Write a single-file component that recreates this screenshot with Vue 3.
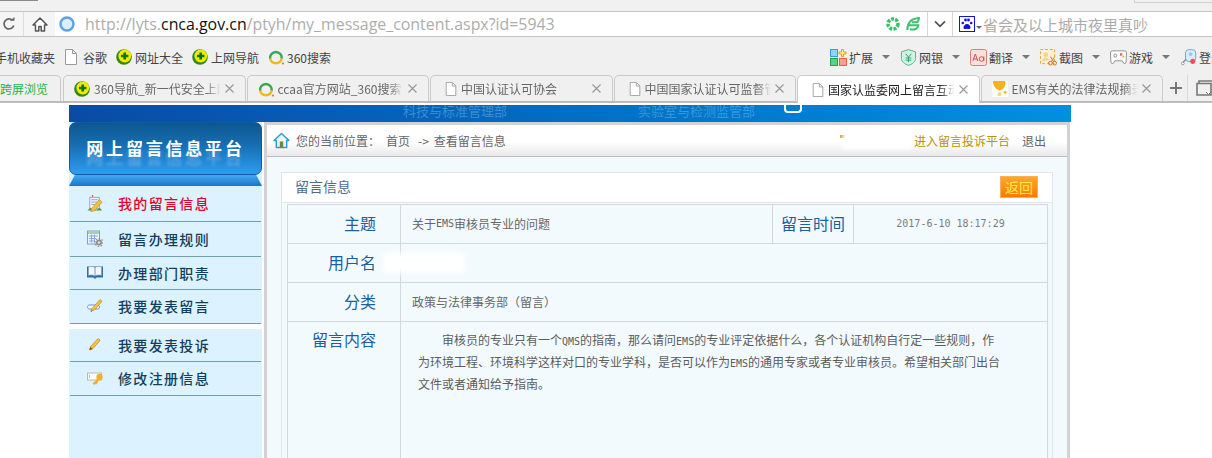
<script setup>
const bookmarks = [
  { icon: '#i-doc', text: '谷歌', cls: 'bm-doc' },
  { icon: '#i-360', text: '网址大全', cls: 'bm-360' },
  { icon: '#i-360', text: '上网导航', cls: 'bm-360' },
  { icon: '#i-ring', text: '360搜索', cls: 'bm-360' }
]
const tools = [
  { icon: '#t-ext', text: '扩展' },
  { icon: '#t-bank', text: '网银' },
  { icon: '#t-aa', text: '翻译' },
  { icon: '#t-cut', text: '截图' },
  { icon: '#t-game', text: '游戏' }
]
const tabs = [
  { icon: '#i-360', title: '360导航_新一代安全上网导航' },
  { icon: '#i-ring', title: 'ccaa官方网站_360搜索' },
  { icon: '#i-doc', title: '中国认证认可协会', doc: true },
  { icon: '#i-doc', title: '中国国家认证认可监督管理委员会', doc: true },
  { icon: '#i-doc', title: '国家认监委网上留言互动平台', doc: true, active: true },
  { icon: '#i-bell', title: 'EMS有关的法律法规摘录集合' }
]
const menu = [
  { icon: '#m-note', text: '我的留言信息', h: 36, active: true },
  { icon: '#m-cal', text: '留言办理规则', h: 35 },
  { icon: '#m-book', text: '办理部门职责', h: 33 },
  { icon: '#m-chat', text: '我要发表留言', h: 34, gapAfter: true },
  { icon: '#m-pen', text: '我要发表投诉', h: 33 },
  { icon: '#m-key', text: '修改注册信息', h: 34 }
]
</script>

<template>
  <div class="page">
    <svg class="defs" width="0" height="0">
      <symbol id="i-360" viewBox="0 0 16 16">
        <circle cx="8" cy="8" r="7.8" fill="#2f8a12" />
        <circle cx="8.800" cy="7" r="6.400" fill="#f4ea00" />
        <path d="M7.400 3.400h2.600v2.400h2.400v2.400H10v2.400H7.400V8.200H5V5.800h2.400z" fill="#17700f" />
      </symbol>
      <symbol id="i-ring" viewBox="0 0 16 16">
        <path d="M2.200 9.800A5.800 5.800 0 1 1 13.600 9.800" fill="none" stroke="#35a853" stroke-width="2.400" />
        <path d="M2.200 9.500A5.800 5.800 0 0 0 13.600 9.500" fill="none" stroke="#f6b71a" stroke-width="2.400" />
        <circle cx="15" cy="14.500" r="1.100" fill="#ee7a1a" />
      </symbol>
      <symbol id="i-doc" viewBox="0 0 16 16">
        <path d="M2.500 .5h7l4 4v11h-11z" fill="#fff" stroke="#9a9a9a" />
        <path d="M9.500 .5v4h4" fill="none" stroke="#9a9a9a" />
      </symbol>
      <symbol id="i-bell" viewBox="0 0 17 17">
        <rect width="17" height="17" fill="#fff" />
        <path d="M1 0h13c1 5-1 9-6 10C4 9 1 5 1 0z" fill="#f4b41a" />
        <circle cx="14" cy="12" r="1.500" fill="#f4b41a" />
        <circle cx="8" cy="14" r="2" fill="#f6d27a" />
      </symbol>
      <symbol id="t-ext" viewBox="0 0 17 17">
        <rect x=".5" y=".5" width="7" height="7" fill="#8fd4fa" stroke="#3c9ad8" />
        <rect x=".5" y="9.500" width="7" height="7" fill="#5fd08a" stroke="#1fa04a" />
        <rect x="9.500" y="9.500" width="7" height="7" fill="#fba08f" stroke="#e8604a" />
        <path d="M11.500 .5h2v2.500h2.500v2h-2.500v2.500h-2V5H9V3h2.500z" fill="#fff2a0" stroke="#e8a010" />
      </symbol>
      <symbol id="t-bank" viewBox="0 0 17 18">
        <path d="M8.500 .7l7.500 2.300v7c0 3.500-3.500 6-7.500 7.300C4.500 16 1 13.500 1 10V3z" fill="#d4f2e4" stroke="#4cb488" />
        <path d="M5.500 5l3 3.500L11.500 5M8.500 8.500V14M5.500 9.500h6M5.500 11.800h6" fill="none" stroke="#2c9c6c" />
      </symbol>
      <symbol id="t-aa" viewBox="0 0 17 17">
        <rect x=".5" y=".5" width="16" height="16" rx="2" fill="#fde0dc" stroke="#d88078" />
        <path d="M2.800 12l2.500-7 2.500 7M3.700 10h3.200" fill="none" stroke="#c8584e" />
        <circle cx="11.500" cy="10" r="2.300" fill="none" stroke="#c8584e" />
        <path d="M13.800 7.500V12" stroke="#c8584e" />
      </symbol>
      <symbol id="t-cut" viewBox="0 0 18 18">
        <rect x=".5" y=".5" width="15" height="15" fill="#fdf0d4" stroke="#e8a030" stroke-dasharray="3 2" />
        <circle cx="6" cy="6" r="2.500" fill="#f4d48a" />
        <path d="M2.500 13c0-3 2-4 3.500-4s3 1 3 3" fill="#f4d48a" />
        <circle cx="11" cy="15" r="2" fill="none" stroke="#c87818" />
        <circle cx="15.500" cy="15" r="2" fill="none" stroke="#c87818" />
        <path d="M11 8l3.500 5.500M15.500 8L12 13.500" stroke="#c87818" />
      </symbol>
      <symbol id="t-game" viewBox="0 0 18 17">
        <path d="M2.500 1.500h13a2 2 0 0 1 2 2l-.5 10c0 1.500-2 2-2.800 .8L13 12H5l-1.200 2.300C3 15.500 1 15 1 13.500L.5 3.500a2 2 0 0 1 2-2z" fill="#fff" stroke="#8c8c8c" />
        <circle cx="5.500" cy="6.500" r="1.600" fill="none" stroke="#8c8c8c" />
        <rect x="10.500" y="4" width="2.500" height="2.500" fill="#e85a4a" />
        <rect x="13" y="6.500" width="2" height="2" fill="#f0b030" />
      </symbol>
      <symbol id="t-user" viewBox="0 0 18 20">
        <rect x="5.500" y=".8" width="12" height="14" rx="4" fill="#d8eefc" stroke="#5e9cc8" />
        <circle cx="11.500" cy="6" r="2.300" fill="#9cc8ea" />
        <path d="M6 12L1.500 17" stroke="#8c8c8c" stroke-width="1.500" />
        <circle cx="2.300" cy="17" r="1.600" fill="#fff" stroke="#8c8c8c" />
        <circle cx="14" cy="14.500" r="3" fill="#f0505a" />
      </symbol>
      <symbol id="m-note" viewBox="0 0 16 18">
        <rect x="2.500" y="2.500" width="10" height="12" fill="#f4f6fa" stroke="#8fa4c0" />
        <path d="M4 5h7M4 7.500h6M4 10h4" stroke="#8fa4c0" />
        <path d="M5.500 0v2" stroke="#c83030" />
        <path d="M0 16.500l3-3 3 2 4 0 3-2 2.500 3z" fill="#4a9a3a" />
        <path d="M4 14.500L12.500 5l3 2.500-8 9.200-4 .8z" fill="#f4c040" stroke="#c8862a" stroke-width=".7" />
      </symbol>
      <symbol id="m-cal" viewBox="0 0 16 16">
        <rect x=".5" y=".5" width="12" height="13" fill="#eef4fc" stroke="#7f9cd0" />
        <rect x="1" y="1" width="11" height="2.500" fill="#a8d0a0" />
        <path d="M2 5.500h9M2 8h7M2 10.500h6M4.500 4v8M7.500 4v8" stroke="#8fa8d4" />
        <circle cx="12" cy="12" r="3" fill="#8e8e8e" />
        <circle cx="12" cy="12" r="4" fill="none" stroke="#8e8e8e" stroke-width="1.200" stroke-dasharray="1.500 1.500" />
        <circle cx="12" cy="12" r="1.200" fill="#e6e6e6" />
      </symbol>
      <symbol id="m-book" viewBox="0 0 16 14">
        <path d="M0 1h16v11H9.500l-1.500 1.500L6.500 12H0z" fill="#2d6ea8" />
        <path d="M1.500 1.500c2.500-.8 5 -.5 6.500 .5v8.500c-1.500-1-4-1.300-6.500-.5zM14.500 1.500c-2.500-.8-5-.5-6.500 .5v8.500c1.500-1 4-1.300 6.500-.5z" fill="#f4f8fc" stroke="#7a9cc0" stroke-width=".6" />
      </symbol>
      <symbol id="m-chat" viewBox="0 0 16 16">
        <path d="M2.500 6.500h8c1.200 0 2 .8 2 2s-.8 2-2 2H7l-3 3 .5-3h-2c-1.200 0-2-.8-2-2s.8-2 2-2z" fill="#f2f7fd" stroke="#6d8fc0" />
        <path d="M5 10L12.500 1.500c1-.8 2.800 .8 2 2L7.500 11.500l-3 1z" fill="#f4c040" stroke="#c8862a" stroke-width=".7" />
      </symbol>
      <symbol id="m-pen" viewBox="0 0 16 16">
        <path d="M3.500 10L10.500 2.500c1-1 3 .8 2.300 2L5.500 12.500 2.500 13.500z" fill="#f4c040" stroke="#c8862a" stroke-width=".7" />
        <path d="M2.500 13.500l.7-3 2.300 2z" fill="#7a4a20" />
      </symbol>
      <symbol id="m-key" viewBox="0 0 16 14">
        <rect x=".5" y="1.500" width="14" height="7" fill="#fff" stroke="#b8b8b8" />
        <path d="M2.500 3.500v3" stroke="#b8b8b8" />
        <circle cx="12.500" cy="5.500" r="3.200" fill="#f0b030" />
        <path d="M11 6.500L5.500 12l1.800 1.500 1-1 1 .6 1-1.300 2-3.800z" fill="#f0b030" />
      </symbol>
    </svg>

    <div class="strip"></div>

    <div class="address">
      <div class="nav-btn refresh">
        <svg width="14" height="14" viewBox="0 0 14 14"><path d="M11.800 8.500A5 5 0 1 1 10.500 3.300" fill="none" stroke="#666" stroke-width="1.700" /><path d="M8 3.800h4.500V0z" fill="#666" /></svg>
      </div>
      <div class="nav-btn home">
        <svg width="16" height="15" viewBox="0 0 16 15"><path d="M8 1L1 8h2.500v6h3.300V9.500h2.400V14h3.300V8H15z" fill="#fff" stroke="#555" stroke-width="1.500" stroke-linejoin="round" /></svg>
      </div>
      <div class="url-box">
        <svg class="globe" width="16" height="16" viewBox="0 0 16 16"><circle cx="8" cy="8" r="6.500" fill="#dceefd" stroke="#5aa2e8" stroke-width="2.400" /></svg>
        <span class="url">http://lyts.<b>cnca.gov.cn</b>/ptyh/my_message_content.aspx?id=5943</span>
        <svg class="speed" width="14" height="14" viewBox="0 0 14 14"><circle cx="7" cy="7" r="5" fill="none" stroke="#3cc070" stroke-width="3.600" stroke-dasharray="3 1.200" /></svg>
        <svg class="leaf" width="14" height="14" viewBox="0 0 14 14"><path d="M1.500 13C1 6 5 1.500 13 1c0 2-.8 3-2 4.300H6M2.500 8.300h9.800c-.5 3-3.500 5-8.300 4" fill="none" stroke="#3cc070" stroke-width="2" /></svg>
      </div>
      <div class="drop">
        <svg width="12" height="8" viewBox="0 0 12 8"><path d="M1 1.300l5 5 5-5" fill="none" stroke="#555" stroke-width="1.800" /></svg>
      </div>
      <div class="search">
        <svg width="16" height="16" viewBox="0 0 16 16">
          <rect x=".5" y=".5" width="15" height="15" fill="#fff" stroke="#1414e0" />
          <path d="M8 8c2 0 3.500 2 3.500 3.500S10 13.500 8 12.800c-2 .7-3.500 .2-3.500-1.300S6 8 8 8z" fill="#1414e0" />
          <circle cx="3.800" cy="7" r="1.300" fill="#1414e0" /><circle cx="6.500" cy="4" r="1.400" fill="#1414e0" />
          <circle cx="9.500" cy="4" r="1.400" fill="#1414e0" /><circle cx="12.200" cy="7" r="1.300" fill="#1414e0" />
        </svg>
        <i class="mini-caret"></i>
        <span class="search-text">省会及以上城市夜里真吵</span>
      </div>
    </div>

    <div class="bookbar">
      <span class="bm-first">手机收藏夹</span>
      <span v-for="b in bookmarks" :key="b.text" class="bm" :class="b.cls">
        <svg class="bm-icon"><use :href="b.icon" /></svg>{{ b.text }}
      </span>
      <div class="tools">
        <i class="grip"></i>
        <span v-for="t in tools" :key="t.text" class="tool">
          <svg class="tool-icon"><use :href="t.icon" /></svg>
          <span class="tool-text">{{ t.text }}</span>
          <i class="caret"></i>
        </span>
        <span class="tool">
          <svg class="tool-icon"><use href="#t-user" /></svg>
          <span class="tool-text">登录</span>
        </span>
      </div>
    </div>

    <div class="tabbar">
      <div class="tab tab-first">跨屏浏览</div>
      <div v-for="t in tabs" :key="t.title" class="tab" :class="{ active: t.active, doc: t.doc }">
        <svg class="tab-icon"><use :href="t.icon" /></svg>
        <span class="tab-title">{{ t.title }}</span>
        <svg class="tab-close" width="9" height="9" viewBox="0 0 9 9"><path d="M.5 .5l8 8M8.500 .5l-8 8" stroke="#999" stroke-width="1.200" /></svg>
      </div>
      <div class="tab-plus">
        <svg width="12" height="12" viewBox="0 0 12 12"><path d="M6 0v12M0 6h12" stroke="#777" stroke-width="2" /></svg>
      </div>
      <div class="tab-restore">
        <svg width="17" height="17" viewBox="0 0 17 17"><path d="M3 3V1h14M1 3.500h14V15H1z" fill="none" stroke="#777" stroke-width="1.600" /><path d="M10 12l2.500 2.500L15 12" fill="#fff" stroke="#777" /></svg>
      </div>
    </div>

    <div class="site">
      <div class="banner">
        <span class="banner-a">科技与标准管理部</span>
        <span class="banner-b">实验室与检测监管部</span>
        <i class="banner-tag"></i>
      </div>

      <div class="main">
        <aside class="side">
          <div class="side-head"><span>网上留言信息平台</span></div>
          <div class="side-wedge"></div>
          <ul class="menu">
            <li
              v-for="m in menu"
              :key="m.text"
              class="menu-item"
              :class="{ on: m.active, gap: m.gapAfter }"
              :style="{ height: m.h + 'px' }"
            >
              <svg class="menu-icon"><use :href="m.icon" /></svg>
              <span>{{ m.text }}</span>
            </li>
          </ul>
        </aside>

        <section class="content">
          <div class="crumb">
            <svg class="crumb-home" width="17" height="17" viewBox="0 0 17 17">
              <path d="M8.500 1.500L1 8.500h2.300V15.500h10.400V8.500H16z" fill="#e8f6fc" stroke="#2b9ad0" stroke-width="1.400" stroke-linejoin="round" />
              <rect x="6.800" y="9.500" width="3.400" height="6" fill="#5a8a50" />
            </svg>
            <span class="crumb-label">您的当前位置&#xFF1A;</span>
            <span class="crumb-a">首页</span>
            <span class="crumb-arrow">-&gt;</span>
            <span>查看留言信息</span>
            <span class="crumb-right">
              <i class="crumb-mark"></i>
              <i class="crumb-blob"></i>
              <a class="crumb-link">进入留言投诉平台</a>
              <a class="crumb-exit">退出</a>
            </span>
          </div>

          <div class="panel">
            <div class="panel-head">
              <span>留言信息</span>
              <button class="back" type="button">返回</button>
            </div>
            <div class="table">
              <div class="c label">主题</div>
              <div class="c val">关于<span class="mono">EMS</span>审核员专业的问题</div>
              <div class="c label center">留言时间</div>
              <div class="c date">2017-6-10 18:17:29</div>

              <div class="c label">用户名</div>
              <div class="c val wide"><i class="user-blob"></i></div>

              <div class="c label">分类</div>
              <div class="c val wide">政策与法律事务部&#xFF08;留言&#xFF09;</div>

              <div class="c label tall">留言内容</div>
              <div class="c body wide">
                <p>审核员的专业只有一个<span class="mono">QMS</span>的指南&#xFF0C;那么请问<span class="mono">EMS</span>的专业评定依据什么&#xFF0C;各个认证机构自行定一些规则&#xFF0C;作为环境工程、环境科学这样对口的专业学科&#xFF0C;是否可以作为<span class="mono">EMS</span>的通用专家或者专业审核员。希望相关部门出台文件或者通知给予指南。</p>
              </div>
            </div>
          </div>
        </section>
      </div>
    </div>
  </div>
</template>

<style scoped>
.page {
  width: 1212px;
  height: 458px;
  overflow: hidden;
  background: #fff;
  font-family: "Noto Sans CJK SC", "Noto Sans", sans-serif;
  font-size: 12px;
  color: #555;
  display: flex;
  flex-direction: column;
}
.defs { display: block; flex: none; }
svg { flex: none; }
.strip {
  height: 11px;
  background: #f1f1f1;
  flex: none;
  display: flex;
  justify-content: space-between;
}
.strip::before { content: ""; width: 38px; height: 1px; background: #8a8a8a; }
.strip::after { content: ""; width: 77px; height: 2px; border-bottom: 1px solid #d0d0d0; border-left: 1px solid #d0d0d0; }

.address {
  height: 26px;
  flex: none;
  display: flex;
  align-items: stretch;
  border-top: 1px solid #c4c4c4;
  border-bottom: 1px solid #c4c4c4;
  box-sizing: border-box;
  background: #fff;
}
.nav-btn { display: flex; align-items: center; justify-content: center; background: #f5f5f5; }
.refresh { width: 23px; border-right: 1px solid #dcdcdc; justify-content: flex-start; }
.refresh svg { margin-left: 2px; }
.home { width: 31px; }
.url-box { flex: 1; display: flex; align-items: center; padding-left: 4px; min-width: 0; }
.globe { margin-right: 10px; }
.url { font-family: "Open Sans", "Noto Sans", sans-serif; font-size: 15.900px; color: #adadad; white-space: nowrap; line-height: 24px; }
.url b { font-weight: 400; color: #111; }
.speed { margin-left: auto; margin-right: 6px; }
.leaf { margin-right: 7px; }
.drop { width: 24px; border-left: 1px solid #d8d8d8; border-right: 1px solid #d8d8d8; display: flex; align-items: center; justify-content: center; }
.search { width: 259px; display: flex; align-items: center; padding-left: 6px; box-sizing: border-box; }
.mini-caret { border: 3px solid transparent; border-top-color: #666; margin: 9px 1px 0 1px; }
.search-text { font-size: 15px; color: #ababab; white-space: nowrap; }

.bookbar {
  height: 38px;
  flex: none;
  background: #f0f0f0;
  display: flex;
  align-items: center;
  color: #444;
  white-space: nowrap;
  box-sizing: border-box;
  padding-top: 2px;
}
.bm-first { margin-left: -5px; width: 61px; flex: none; }
.bm { display: flex; align-items: center; }
.bm-doc { margin-left: 7px; }
.bm-doc .bm-icon { margin-right: 4px; }
.bm-360 { margin-left: 9px; }
.bm-icon { width: 16px; height: 16px; margin-right: 3px; }
.tools { margin-left: auto; display: flex; align-items: center; flex: none; width: 394px; }
.grip { width: 4px; height: 16px; margin: 0 12px 0 0; background: radial-gradient(circle, #bbb 1.800px, transparent 2px) 0 0 / 4px 6px; }
.tool { width: 70px; flex: none; display: flex; align-items: center; }
.tool-icon { width: 17px; height: 17px; margin-right: 2px; }
.tool-text { font-size: 12px; color: #444; }
.caret { border: 4px solid transparent; border-top-color: #777; margin: 4px 0 0 9px; }

.tabbar {
  height: 28px;
  flex: none;
  background: #f0f0f0;
  border-bottom: 2px solid #bcbcbc;
  box-sizing: border-box;
  display: flex;
  gap: 1px;
  align-items: flex-end;
}
.tab {
  width: 182.500px;
  height: 26px;
  flex: none;
  box-sizing: border-box;
  border: 1px solid #cacaca;
  border-bottom: none;
  border-radius: 5px 5px 0 0;
  background: #f0f0f0;
  display: flex;
  align-items: center;
  padding-left: 10px;
  padding-right: 11px;
  color: #666;
  white-space: nowrap;
}
.tab-first {
  width: 61px;
  margin-right: 1px;
  padding: 0;
  border-left: none;
  border-radius: 0 5px 0 0;
  color: #1db34a;
}
.tab.active { background: #fff; height: 28px; margin-bottom: -2px; color: #222; }
.tab-icon { width: 16px; height: 16px; margin-right: 4px; }
.tab.doc .tab-icon { margin-left: 3px; margin-right: 3px; width: 14px; height: 14px; }
.tab-title {
  flex: 1;
  min-width: 0;
  overflow: hidden;
  -webkit-mask-image: linear-gradient(90deg, #000 88%, transparent 100%);
  mask-image: linear-gradient(90deg, #000 88%, transparent 100%);
}
.tab-close { margin-left: 4px; }
.tab-plus { width: 23px; flex: none; height: 26px; display: flex; align-items: center; justify-content: center; border-right: 1px solid #dadada; }
.tab-restore { flex: 1; height: 26px; display: flex; align-items: center; padding-left: 7px; }

.site { margin: 2px 0 0 69px; width: 1002px; flex: none; }
.banner {
  height: 17px;
  background: linear-gradient(90deg, #0a4ba4 0%, #0560b8 30%, #0078cc 65%, #0090e0 100%);
  display: flex;
  align-items: flex-start;
  overflow: hidden;
  color: rgba(170, 215, 245, .36);
  font-size: 13px;
  line-height: 11px;
  padding-left: 334px;
  box-sizing: border-box;
  white-space: nowrap;
}
.banner-a { width: 235px; flex: none; }
.banner-b { width: 146px; flex: none; }
.banner-tag { width: 14px; height: 6px; border: 2px solid #fff; border-top: none; border-radius: 0 0 4px 4px; flex: none; }

.main { display: flex; align-items: stretch; height: 336px; }
.side { width: 193px; flex: none; background: #dcf2fe; margin-right: 2px; }
.side-head {
  height: 53px;
  box-sizing: border-box;
  border: 1px solid #0d5c9c;
  border-radius: 7px;
  background: linear-gradient(180deg, #0d5791 0%, #176fb4 45%, #2e9df0 100%);
  display: flex;
  align-items: center;
  justify-content: center;
  color: #fff;
  font-size: 17px;
  font-weight: 700;
  letter-spacing: 2.800px;
  text-shadow: 0 9px 3px rgba(255, 255, 255, .22);
  padding-bottom: 3px;
}
.side-wedge {
  height: 11px;
  background: linear-gradient(180deg, #41a8f4, #1976c8);
  clip-path: polygon(3% 0, 97% 0, 100% 100%, 0 100%);
}
.menu { list-style: none; margin: 0; padding: 0; }
.menu-item {
  box-sizing: border-box;
  display: flex;
  align-items: center;
  padding: 0 0 2px 18px;
  position: relative;
  color: #123f5e;
  font-size: 14px;
  font-weight: 500;
  letter-spacing: 1.330px;
  white-space: nowrap;
  box-shadow: inset 0 -1px 0 #6f9fa8;
  margin: 0 1px;
}
.menu-item svg { margin-left: -1px; }
.menu-item.on { color: #e6002d; }
.menu-item.gap::after { content: ""; position: absolute; left: -1px; right: -1px; top: 100%; height: 5px; background: #fff; }
.menu-item.gap + .menu-item { margin-top: 5px; }
.menu-icon { width: 16px; height: 17px; margin-right: 15px; }

.content {
  flex: 1;
  min-width: 0;
  margin-right: 1px;
  border: 3px solid #d2d2d2;
  border-bottom: none;
  background: #f2fafe;
  box-sizing: border-box;
}
.crumb {
  height: 32px;
  box-sizing: border-box;
  border-bottom: 1px solid #bdbdbd;
  background: linear-gradient(180deg, #fff 0%, #fff 55%, #e8e8e8 100%);
  display: flex;
  align-items: center;
  padding: 0 21px 0 6px;
  color: #666;
  white-space: nowrap;
}
.crumb-home { margin-right: 6px; }
.crumb-label { width: 90px; flex: none; }
.crumb-a { margin-right: 8px; }
.crumb-arrow { margin-right: 5px; }
.crumb-right { margin-left: auto; display: flex; align-items: center; }
.crumb-mark { width: 5px; height: 3px; background: #b89400; margin-right: -3px; margin-top: -8px; }
.crumb-blob { width: 70px; height: 16px; background: #fff; filter: blur(2px); margin-right: 2px; }
.crumb-link { color: #b89400; margin-right: 12px; }
.crumb-exit { color: #666; }

.panel {
  margin: 15px 14px 0 14px;
  border: 1px solid #e2e6e8;
  border-bottom: none;
  height: 300px;
  padding: 0 4px 0 5px;
}
.panel-head {
  height: 30px;
  box-sizing: border-box;
  margin: 0 -4px 0 -5px;
  border-bottom: 1px solid #e2e6e8;
  background: #fff;
  display: flex;
  align-items: center;
  padding: 0 14px 4px 13px;
  font-size: 14px;
  color: #4f6c8a;
}
.back {
  margin-left: auto;
  align-self: flex-start;
  margin-top: 3px;
  width: 38px;
  height: 22px;
  padding: 0;
  font-family: inherit;
  font-size: 14px;
  line-height: 20px;
  color: #ffee4a;
  border: 1px solid #f4b060;
  background: linear-gradient(180deg, #ffa82c 0%, #ff7800 100%);
}
.table {
  margin-top: 1px;
  border: 1px solid #d4d8dc;
  border-bottom: none;
  display: grid;
  grid-template-columns: 113px 372px 81px 1fr;
  grid-template-rows: 39px 39px 39px 140px;
}
.c {
  box-sizing: border-box;
  border-bottom: 1px solid #d4d8dc;
  border-right: 1px solid #d4d8dc;
  display: flex;
  align-items: center;
  position: relative;
  min-width: 0;
  padding-bottom: 2px;
}
.label { justify-content: flex-end; padding-right: 24px; font-size: 16px; color: #1a5f9e; }
.label.center { justify-content: center; padding: 0 0 3px; }
.label.tall { align-items: flex-start; padding-top: 5px; line-height: 24px; }
.val { padding-left: 11px; color: #666; }
.wide { grid-column: span 3; border-right: none; }
.date { justify-content: center; color: #7c7c7c; font-family: "DejaVu Sans Mono", monospace; font-size: 10px; border-right: none; }
.mono { font-family: "DejaVu Sans Mono", monospace; font-size: 10px; }
.body { align-items: flex-start; padding: 8px 0 0 17px; }
.body p { margin: 0; width: 586px; line-height: 20px; text-indent: 24px; color: #5c5c5c; }
.user-blob {
  position: absolute;
  left: -18px;
  top: 9px;
  width: 82px;
  height: 20px;
  background: #fff;
  filter: blur(3px);
}
</style>

<style>
html, body { margin: 0; background: #fff; overflow: hidden; }
</style>
